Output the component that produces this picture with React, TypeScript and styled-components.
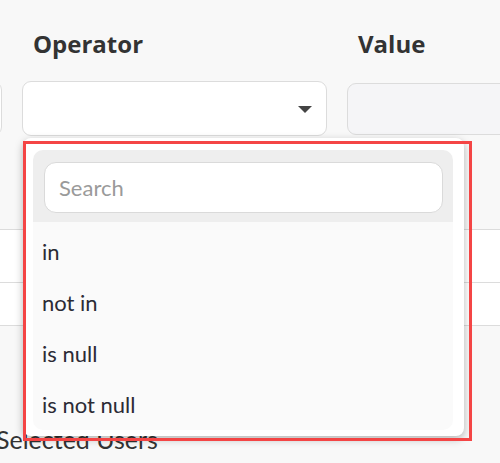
import React from "react";
import styled, { createGlobalStyle } from "styled-components";

const GlobalStyle = createGlobalStyle`
  html, body {
    margin: 0;
    padding: 0;
    background: #f8f8f8;
  }
  body {
    font-family: "Lato", "Open Sans", sans-serif;
    color: #333;
  }
`;

const Page = styled.div`
  width: 500px;
  height: 463px;
  overflow: hidden;
  position: relative;
  background: #f8f8f8;
`;

const FilterGrid = styled.div`
  display: grid;
  grid-template-columns: 305px 305px 305px;
  column-gap: 20px;
  margin-left: -303px;
  padding-top: 28px;
`;

const Field = styled.div`
  position: relative;
  display: flex;
  flex-direction: column;
`;

const Label = styled.div`
  font-family: "Open Sans", sans-serif;
  font-weight: 700;
  font-size: 24px;
  line-height: 32px;
  color: #333;
  padding-left: 11px;
  height: 32px;
  margin-bottom: 21px;
`;

const SelectBox = styled.div<{ $disabled?: boolean }>`
  box-sizing: border-box;
  height: ${(p) => (p.$disabled ? "52px" : "55px")};
  margin-top: ${(p) => (p.$disabled ? "2px" : "0")};
  border: 1px solid #dcdcdc;
  border-radius: 9px;
  background: ${(p) => (p.$disabled ? "#f5f5f7" : "#fff")};
  display: flex;
  align-items: center;
  justify-content: flex-end;
  padding-right: 14px;
`;

const Caret = styled.span`
  width: 0;
  height: 0;
  border-left: 7px solid transparent;
  border-right: 7px solid transparent;
  border-top: 7px solid #444;
  margin-top: 2px;
`;

const Menu = styled.div`
  position: absolute;
  top: 110px;
  left: 1px;
  width: 441px;
  height: 298px;
  box-sizing: border-box;
  background: #fff;
  border-radius: 8px;
  box-shadow: 0 3px 8px rgba(0, 0, 0, 0.28);
  padding: 12px 11px 8px 10px;
  display: flex;
  flex-direction: column;
  z-index: 5;
`;

const Highlight = styled.div`
  position: absolute;
  left: 1px;
  top: 113px;
  width: 449px;
  height: 300px;
  box-sizing: border-box;
  border: 3px solid #f44545;
  pointer-events: none;
  z-index: 6;
`;

const SearchBar = styled.div`
  background: #eeeeee;
  border-radius: 10px 10px 0 0;
  padding: 12px 10px 9px 11px;
`;

const SearchInput = styled.input`
  box-sizing: border-box;
  width: 100%;
  height: 51px;
  border: 1px solid #dadada;
  border-radius: 12px;
  background: #fff;
  padding: 0 14px;
  font-family: "Lato", sans-serif;
  font-size: 22px;
  color: #333;
  outline: none;
  &::placeholder {
    color: #9a9a9a;
  }
`;

const OptionList = styled.ul`
  flex: 1;
  list-style: none;
  margin: 0;
  padding: 4px 0 0;
  background: #fafafa;
  border-radius: 0 0 10px 10px;
`;

const Option = styled.li`
  height: 51px;
  line-height: 51px;
  padding-left: 9px;
  font-family: "Lato", sans-serif;
  font-size: 22px;
  color: #2b2b35;
`;

const TableRows = styled.div`
  margin-top: 93px;
  background: #fff;
  border-top: 1px solid #dcdcdc;
`;

const Row = styled.div`
  height: 52px;
  border-bottom: 1px solid #dcdcdc;
  &:last-child {
    height: 42px;
  }
`;

const SectionTitle = styled.div`
  margin-left: -4px;
  margin-top: 98px;
  font-family: "Lato", sans-serif;
  font-size: 25px;
  line-height: 30px;
  color: #333;
`;

const options = ["in", "not in", "is null", "is not null"];

export default function App() {
  return (
    <Page>
      <GlobalStyle />
      <FilterGrid>
        <Field>
          <Label>Field</Label>
          <SelectBox />
        </Field>
        <Field>
          <Label>Operator</Label>
          <SelectBox>
            <Caret />
          </SelectBox>
          <Menu>
            <SearchBar>
              <SearchInput placeholder="Search" />
            </SearchBar>
            <OptionList>
              {options.map((o) => (
                <Option key={o}>{o}</Option>
              ))}
            </OptionList>
          </Menu>
          <Highlight />
        </Field>
        <Field>
          <Label>Value</Label>
          <SelectBox $disabled />
        </Field>
      </FilterGrid>
      <TableRows>
        <Row />
        <Row />
      </TableRows>
      <SectionTitle>Selected Users</SectionTitle>
    </Page>
  );
}
